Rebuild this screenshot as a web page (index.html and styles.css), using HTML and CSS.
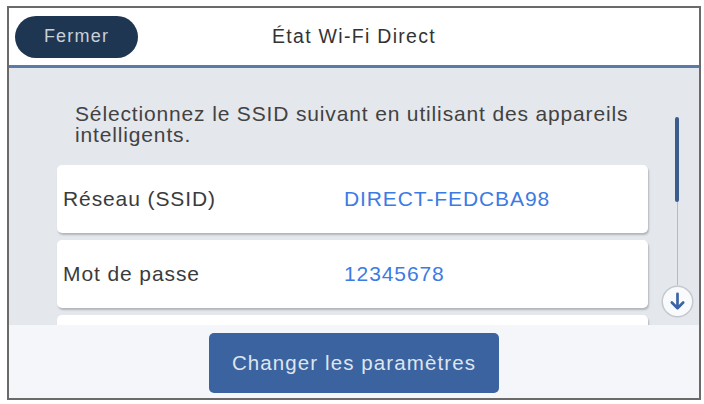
FILE: index.html
```html
<!DOCTYPE html>
<html lang="fr">
<head>
<meta charset="utf-8">
<title>État Wi-Fi Direct</title>
<link rel="stylesheet" href="styles.css">
</head>
<body>
<div class="frame">
  <header class="header">
    <div class="header-left"><button class="close">Fermer</button></div>
    <div class="title">État Wi-Fi Direct</div>
    <div></div>
  </header>
  <div class="sep"></div>
  <main class="content">
    <div class="list">
      <p class="intro">Sélectionnez le SSID suivant en utilisant des appareils intelligents.</p>
      <div class="card"><span class="label">Réseau (SSID)</span><span class="value">DIRECT-FEDCBA98</span></div>
      <div class="card"><span class="label">Mot de passe</span><span class="value">12345678</span></div>
      <div class="card"></div>
    </div>
    <div class="scroll">
      <div class="thumb"></div>
      <div class="track"></div>
      <svg class="down" viewBox="0 0 32 32" aria-hidden="true">
        <circle cx="16" cy="16" r="14.8" fill="#f9fafc" stroke="#c3c8cf" stroke-width="1.4"/>
        <path d="M16 8.5 V22.5 M10.5 17 L16 22.5 L21.5 17" fill="none" stroke="#3b64a4" stroke-width="2.6" stroke-linecap="round" stroke-linejoin="round"/>
      </svg>
    </div>
  </main>
  <footer class="footer">
    <button class="primary">Changer les paramètres</button>
  </footer>
</div>
</body>
</html>
```
FILE: styles.css
```css
body {
  margin: 0;
  background: #ffffff;
  font-family: "Liberation Sans", Arial, sans-serif;
}

.frame {
  margin: 6px 0 0 7px;
  width: 690px;
  height: 390px;
  border: 2px solid #6a6a6a;
  display: flex;
  flex-direction: column;
  overflow: hidden;
}

.header {
  height: 57px;
  flex: none;
  background: #ffffff;
  display: grid;
  grid-template-columns: 1fr auto 1fr;
  align-items: center;
}

.close {
  margin-left: 6px;
  width: 123px;
  height: 42px;
  padding: 0;
  border: 0;
  border-radius: 21px;
  background: #1f3652;
  color: #c9d0d8;
  font-family: "Liberation Sans", Arial, sans-serif;
  font-size: 18px;
  letter-spacing: 1.2px;
}

.title {
  font-size: 19.5px;
  letter-spacing: 1.3px;
  color: #333333;
}

.sep {
  height: 3px;
  flex: none;
  background: #5a7aa8;
}

.content {
  height: 257px;
  flex: none;
  background: #e4e7ec;
  display: flex;
  overflow: hidden;
}

.list {
  flex: none;
  width: 591px;
  margin-left: 48px;
  padding-top: 35px;
}

.intro {
  margin: 0 0 20px 18px;
  font-size: 21px;
  line-height: 21px;
  letter-spacing: 0.85px;
  color: #424242;
}

.card {
  height: 68px;
  margin-bottom: 7px;
  padding-left: 6px;
  background: #ffffff;
  border-radius: 5px;
  box-shadow: 1px 2px 2px rgba(0, 0, 0, 0.22);
  display: grid;
  grid-template-columns: 281px 1fr;
  align-items: center;
  font-size: 21px;
  letter-spacing: 0.9px;
}

.label {
  color: #3b3b3b;
}

.value {
  color: #3c7be3;
}

.scroll {
  flex: none;
  width: 34px;
  margin-left: 12px;
  padding-top: 49px;
  display: flex;
  flex-direction: column;
  align-items: center;
}

.thumb {
  width: 4px;
  height: 85px;
  background: #3c5c8c;
  border-radius: 2px;
}

.track {
  width: 1px;
  height: 83px;
  background: #b5bbc4;
}

.down {
  display: block;
  width: 33px;
  height: 33px;
}

.footer {
  height: 73px;
  flex: none;
  box-sizing: border-box;
  padding-top: 8px;
  background: #f4f6fa;
  display: flex;
  justify-content: center;
  align-items: flex-start;
}

.primary {
  width: 290px;
  height: 60px;
  padding: 0;
  border: 0;
  border-radius: 5px;
  background: #3b63a0;
  color: #dfe5ee;
  font-family: "Liberation Sans", Arial, sans-serif;
  font-size: 20.5px;
  letter-spacing: 1.1px;
}
```
